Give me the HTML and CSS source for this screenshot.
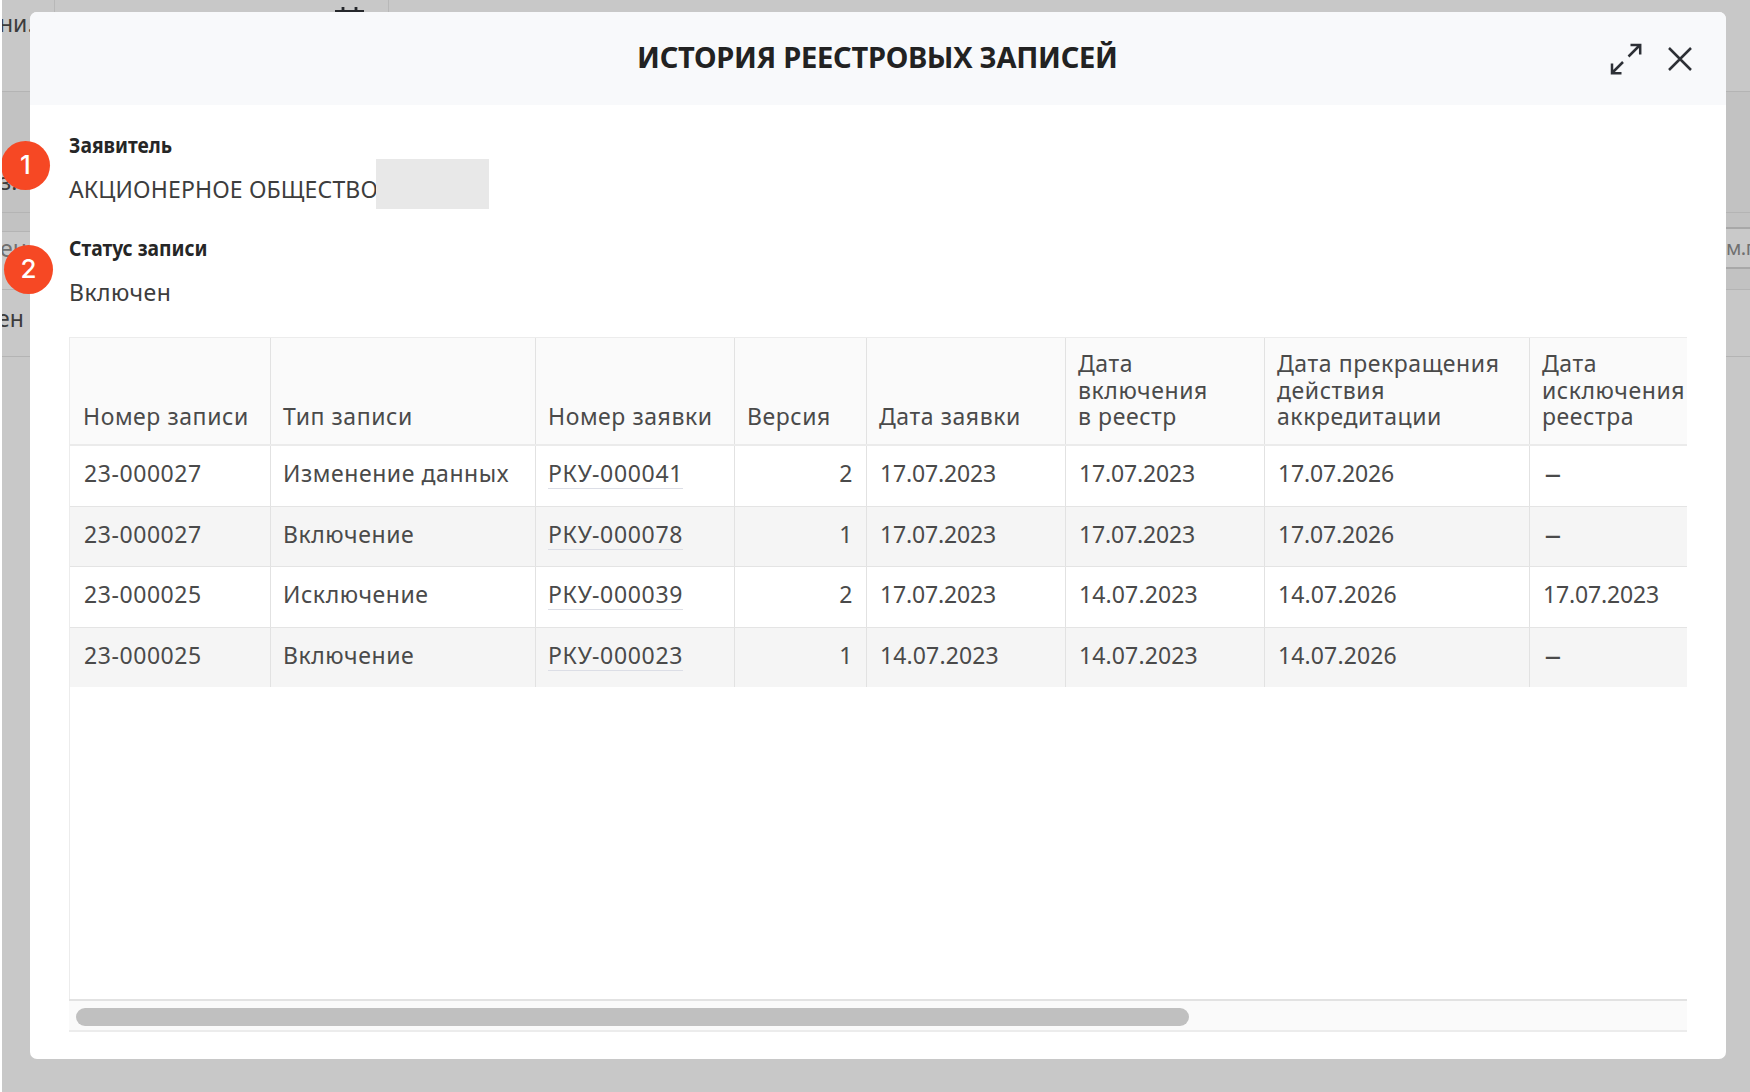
FILE: index.html
```html
<!DOCTYPE html>
<html lang="ru">
<head>
<meta charset="utf-8">
<title>История реестровых записей</title>
<link rel="stylesheet" href="styles.css">
</head>
<body>
<div class="page">
  <div class="band band-top">
    <span class="frag frag-top">ни.</span>
    <svg class="calendar" width="30" height="20" viewBox="0 0 30 20"><path d="M0 4.5h29M8 0v8M21 0v8" fill="none" stroke="#26282c" stroke-width="2.8"/></svg>
  </div>
  <div class="band band-head"><span class="frag">з.</span></div>
  <div class="band band-filter">
    <div class="field field-left"><span class="frag muted">ен</span></div>
    <div class="field field-right"><span class="frag muted">м.г</span></div>
  </div>
  <div class="band band-row"><span class="frag frag-row">ен</span></div>
</div>

<section class="modal">
  <header class="modal-head">
    <h1 class="modal-title">ИСТОРИЯ РЕЕСТРОВЫХ ЗАПИСЕЙ</h1>
    <div class="actions">
      <svg width="32" height="32" viewBox="0 0 32 32"><g fill="none" stroke="#2d3036" stroke-width="2.5"><path d="M18.5 13.5 29.5 2.5M20.5 2H30.2V11.5"/><path d="M13 19 2.5 29.5M11.5 30.2H2V20.5"/></g></svg>
      <svg width="24" height="24" viewBox="0 0 24 24"><path d="M1 1 23 23M23 1 1 23" fill="none" stroke="#2d3036" stroke-width="2.5"/></svg>
    </div>
  </header>
  <div class="modal-body">
    <div class="label">Заявитель</div>
    <div class="value value-caps">АКЦИОНЕРНОЕ ОБЩЕСТВО<span class="redacted"></span></div>
    <div class="label">Статус записи</div>
    <div class="value">Включен</div>

    <div class="table">
      <div class="row head">
        <div class="cell">Номер записи</div><div class="cell">Тип записи</div><div class="cell">Номер заявки</div><div class="cell">Версия</div><div class="cell">Дата заявки</div><div class="cell">Дата<br>включения<br>в реестр</div><div class="cell">Дата прекращения<br>действия<br>аккредитации</div><div class="cell">Дата<br>исключения<br>реестра</div>
      </div>
      <div class="row">
        <div class="cell">23-000027</div><div class="cell">Изменение данных</div><div class="cell"><a class="link">РКУ-000041</a></div><div class="cell num">2</div><div class="cell date">17.07.2023</div><div class="cell date">17.07.2023</div><div class="cell date">17.07.2026</div><div class="cell"><span class="dash">–</span></div>
      </div>
      <div class="row odd">
        <div class="cell">23-000027</div><div class="cell">Включение</div><div class="cell"><a class="link">РКУ-000078</a></div><div class="cell num">1</div><div class="cell date">17.07.2023</div><div class="cell date">17.07.2023</div><div class="cell date">17.07.2026</div><div class="cell"><span class="dash">–</span></div>
      </div>
      <div class="row">
        <div class="cell">23-000025</div><div class="cell">Исключение</div><div class="cell"><a class="link">РКУ-000039</a></div><div class="cell num">2</div><div class="cell date">17.07.2023</div><div class="cell date wide">14.07.2023</div><div class="cell date wide">14.07.2026</div><div class="cell date">17.07.2023</div>
      </div>
      <div class="row odd">
        <div class="cell">23-000025</div><div class="cell">Включение</div><div class="cell"><a class="link">РКУ-000023</a></div><div class="cell num">1</div><div class="cell date wide">14.07.2023</div><div class="cell date wide">14.07.2023</div><div class="cell date wide">14.07.2026</div><div class="cell"><span class="dash">–</span></div>
      </div>
    </div>
    <div class="scrollbar"><div class="thumb"></div></div>
  </div>
</section>

<div class="marker marker-1">1</div>
<div class="marker marker-2">2</div>
<div class="edge"></div>
</body>
</html>
```
FILE: styles.css
```css
* { box-sizing: border-box; }

body {
  margin: 0;
  position: relative;
  width: 1750px;
  height: 1092px;
  overflow: hidden;
  background: #c8c8c8;
  font-family: "Noto Sans", "Open Sans", sans-serif;
  font-size: 23px;
  color: #4a4a4a;
}

/* Dimmed page behind the dialog */
.page { display: flex; flex-direction: column; height: 1092px; }
.band { border-bottom: 1px solid #b4b4b4; }
.band-top {
  height: 92px;
  display: flex;
  background: linear-gradient(#b8b8b8, #b8b8b8) 54px 0 / 1px 100% no-repeat,
              linear-gradient(#b8b8b8, #b8b8b8) 388px 0 / 1px 100% no-repeat;
}
.band-head { height: 121px; background: #c2c2c2; padding-top: 73px; }
.band-filter {
  height: 77px;
  display: flex;
  justify-content: space-between;
  background: #c2c2c2;
}
.field { background: #c9c9c9; width: 30px; }
.field-left { height: 58px; margin-top: 18px; border-top: 1px solid #b4b4b4; padding-top: 4px; }
.field-right { height: 42px; margin-top: 14px; border: solid #a8a8a8; border-width: 2px 0; padding: 10px 0 0 6px; }
.band-row { height: 67px; padding-top: 12px; }
.frag { display: block; width: 34px; line-height: 32px; color: #3c3c3c; white-space: nowrap; }
.frag-top { padding-top: 7px; margin-left: -1px; }
.frag-row { margin-left: -3px; }
.field-left .frag { line-height: 24px; }
.field-right .frag { line-height: 17px; font-size: 20px; letter-spacing: -0.5px; }
.field .muted { color: #707070; }
.calendar { margin: 7px 0 0 302px; }

/* Dialog */
.modal {
  position: absolute;
  left: 30px;
  top: 12px;
  width: 1696px;
  height: 1047px;
  border-radius: 7px;
  background: #fff;
  overflow: hidden;
}
.modal-head {
  height: 93px;
  display: flex;
  background: #f8f9fb;
  padding: 0 34px 0 607px;
  justify-content: space-between;
}
.modal-title {
  margin: 0;
  font-size: 29px;
  font-weight: 700;
  line-height: 90px;
  letter-spacing: -0.29px;
  color: #222;
  white-space: nowrap;
}
.actions { display: flex; gap: 26px; align-items: center; height: 94px; }
.modal-body { padding: 23px 39px 0 39px; }
.label {
  height: 34px;
  line-height: 32px;
  font-size: 22px;
  font-weight: 700;
  transform: scaleX(0.875);
  transform-origin: left;
  color: #262626;
}
.value {
  height: 69px;
  line-height: 54px;
  display: flex;
  align-items: flex-start;
  letter-spacing: 0.45px;
  color: #3d3d3d;
}
.value-caps { letter-spacing: 0.15px; white-space: nowrap; }
.redacted { width: 113px; height: 50px; margin: -3px 0 0 -2px; background: #e8e8e8; }

/* Table */
.table {
  height: 662px;
  margin-top: 3px;
  border: solid #ececec;
  border-width: 1px 0 0 1px;
  overflow: hidden;
  letter-spacing: 0.57px;
}
.row {
  display: grid;
  grid-template-columns: 201px 265px 199px 132px 199px 199px 265px 1fr;
  height: 60.6px;
  line-height: 55px;
  border-bottom: 1px solid #e4e4e4;
}
.cell { padding-left: 12px; border-right: 1px solid #e2e2e2; white-space: nowrap; }
.cell:first-child { padding-left: 14px; }
.cell:last-child { border-right: 0; }
.head {
  height: 108px;
  line-height: 26.6px;
  background: #fafafa;
  border-bottom-width: 2px;
  border-bottom-color: #ebebeb;
}
.head .cell { display: flex; align-items: flex-end; padding-bottom: 14px; }
.head .cell:first-child { padding-left: 13px; }
.odd { background: #f5f5f5; }
.row:last-child { height: 59.6px; border-bottom: 0; }
.num { text-align: right; padding-right: 13px; }
.date { padding-left: 13px; letter-spacing: -0.16px; }
.wide { letter-spacing: 0.12px; }
.dash { display: inline-block; height: 54px; padding-left: 2px; line-height: 52px; font-size: 28px; transform: scaleX(1.2); transform-origin: left; }
.link { display: inline-block; height: 43px; letter-spacing: 0.67px; border-bottom: 1px solid #dcdee6; }

.scrollbar {
  height: 33px;
  padding: 7px 0 0 7px;
  background: #fafafa;
  border-top: 2px solid #e2e2e2;
  border-bottom: 2px solid #ececec;
}
.thumb { width: 1113px; height: 18px; border-radius: 9px; background: #c0c0c0; }

/* Numbered callouts */
.marker {
  position: absolute;
  width: 49px;
  height: 49px;
  border-radius: 50%;
  background: #f64824;
  color: #fff;
  font: 500 26px/48px Inter, sans-serif;
  text-align: center;
}
.marker-1 { left: 1px; top: 141px; }
.marker-2 { left: 4px; top: 245px; }
.edge { position: absolute; left: 0; top: 0; width: 2px; height: 1092px; background: #fff; }
```
